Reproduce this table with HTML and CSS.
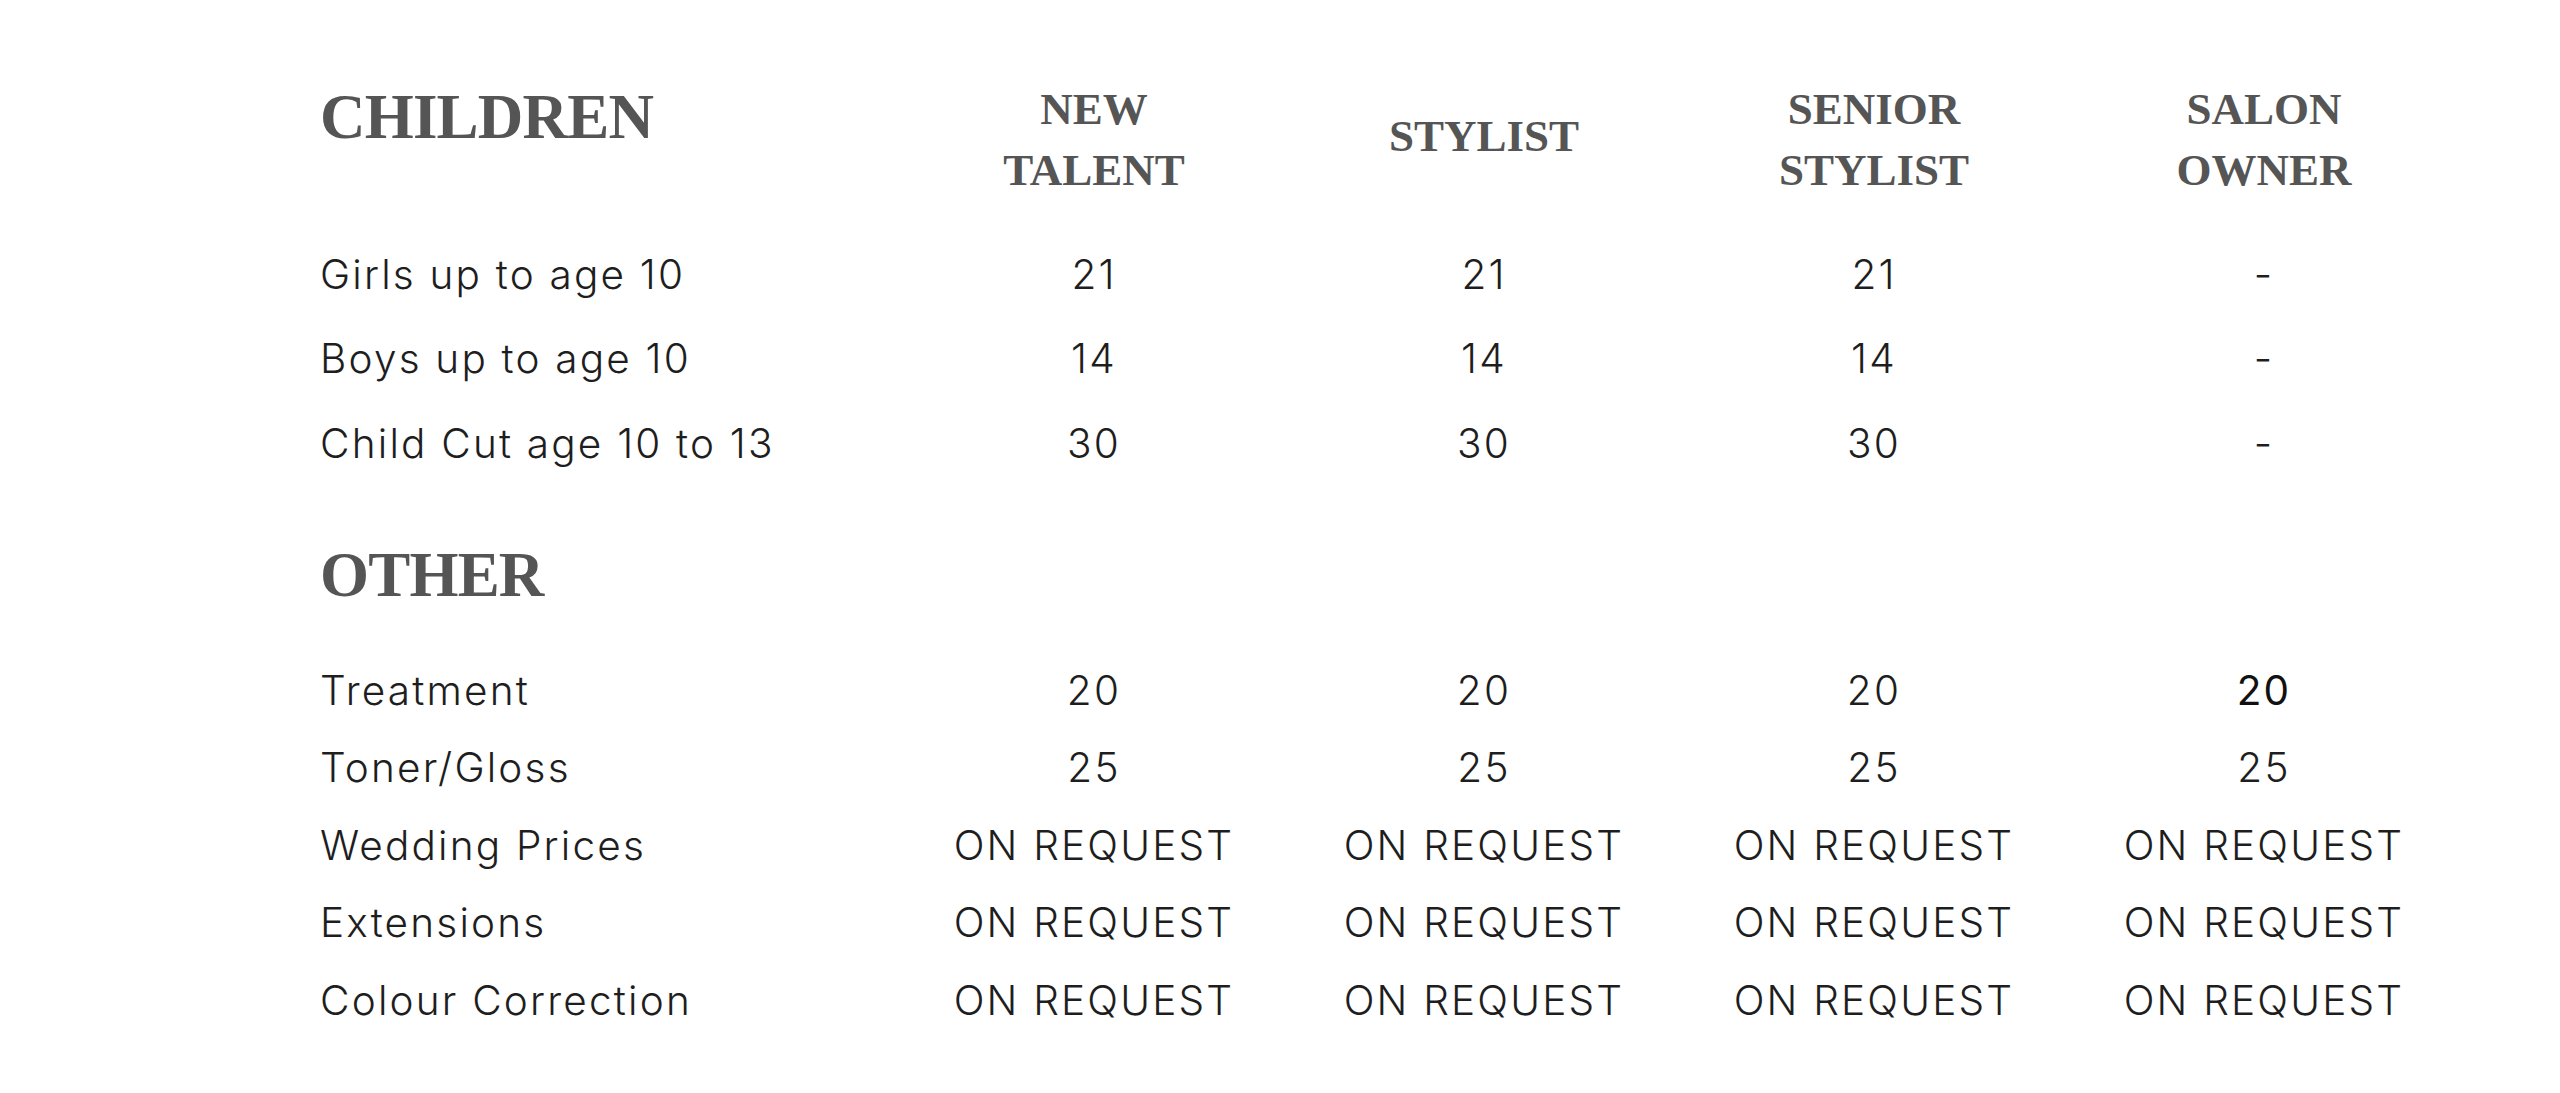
FILE: index.html
```html
<!DOCTYPE html>
<html lang="en">
<head>
<meta charset="utf-8">
<title>Prices</title>
<link rel="stylesheet" href="styles.css">
</head>
<body>
<main class="price-list">
  <section class="group group-children">
    <div class="grid head">
      <h2 class="section-title">CHILDREN</h2>
      <div class="col-title">NEW<br>TALENT</div>
      <div class="col-title single">STYLIST</div>
      <div class="col-title">SENIOR<br>STYLIST</div>
      <div class="col-title">SALON<br>OWNER</div>
    </div>
    <div class="rows rows-children">
      <div class="grid row"><span class="label">Girls up to age 10</span><span class="val">21</span><span class="val">21</span><span class="val">21</span><span class="val">-</span></div>
      <div class="grid row"><span class="label">Boys up to age 10</span><span class="val">14</span><span class="val">14</span><span class="val">14</span><span class="val">-</span></div>
      <div class="grid row"><span class="label">Child Cut age 10 to 13</span><span class="val">30</span><span class="val">30</span><span class="val">30</span><span class="val">-</span></div>
    </div>
  </section>
  <section class="group group-other">
    <div class="grid head">
      <h2 class="section-title">OTHER</h2>
    </div>
    <div class="rows rows-other">
      <div class="grid row"><span class="label">Treatment</span><span class="val">20</span><span class="val">20</span><span class="val">20</span><span class="val strong">20</span></div>
      <div class="grid row"><span class="label">Toner/Gloss</span><span class="val">25</span><span class="val">25</span><span class="val">25</span><span class="val">25</span></div>
      <div class="grid row"><span class="label">Wedding Prices</span><span class="val">ON REQUEST</span><span class="val">ON REQUEST</span><span class="val">ON REQUEST</span><span class="val">ON REQUEST</span></div>
      <div class="grid row"><span class="label">Extensions</span><span class="val">ON REQUEST</span><span class="val">ON REQUEST</span><span class="val">ON REQUEST</span><span class="val">ON REQUEST</span></div>
      <div class="grid row"><span class="label">Colour Correction</span><span class="val">ON REQUEST</span><span class="val">ON REQUEST</span><span class="val">ON REQUEST</span><span class="val">ON REQUEST</span></div>
    </div>
  </section>
</main>
</body>
</html>
```
FILE: styles.css
```css
html, body {
  margin: 0;
  padding: 0;
  background: #ffffff;
}

.price-list {
  padding: 79px 0 40px 320px;
  font-family: "Inter", "Liberation Sans", sans-serif;
  color: #1e1e1e;
}

.grid {
  display: grid;
  grid-template-columns: 579px repeat(4, 390px);
  align-items: center;
}

.section-title {
  margin: 0;
  align-self: start;
  font-family: "Liberation Serif", serif;
  font-weight: 700;
  font-size: 63px;
  line-height: 77px;
  letter-spacing: -0.8px;
  color: #555555;
}

.col-title {
  text-align: center;
  font-family: "Liberation Serif", serif;
  font-weight: 700;
  font-size: 45px;
  line-height: 61px;
  color: #555555;
}

.col-title.single {
  margin-bottom: 8px;
}

.rows-children {
  margin-top: 32px;
}

.rows-children .row {
  height: 84.5px;
}

.group-other {
  margin-top: 50px;
}

.rows-other {
  margin-top: 39px;
}

.rows-other .row {
  height: 77.5px;
}

.label,
.val {
  font-size: 40.5px;
  font-weight: 300;
  line-height: 1.2;
  letter-spacing: 2.2px;
}

.val {
  text-align: center;
}

.val.strong {
  font-weight: 400;
  color: #111111;
}
```
